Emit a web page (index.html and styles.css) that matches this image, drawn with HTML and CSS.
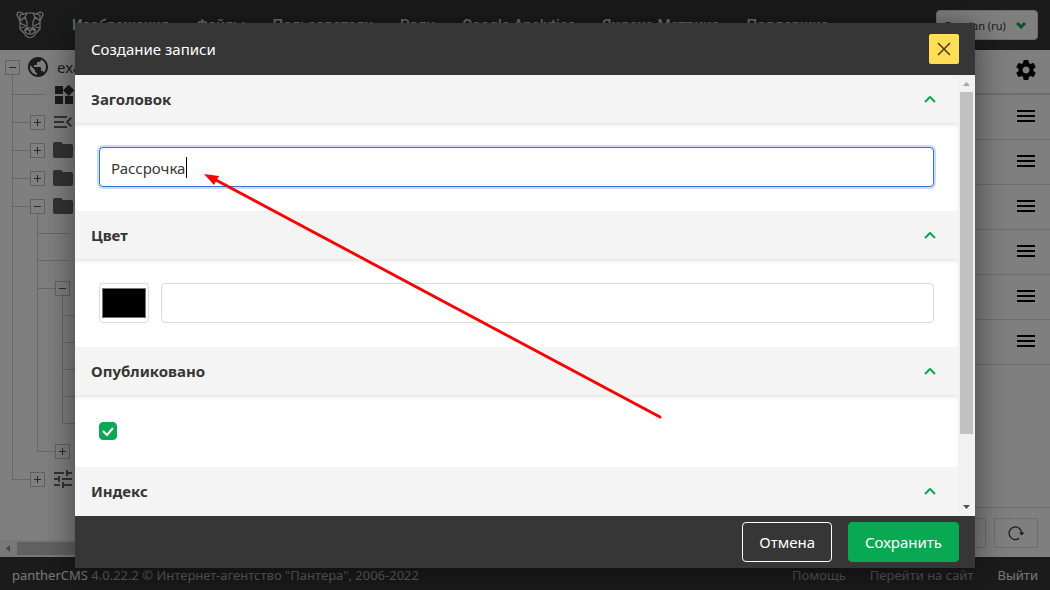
FILE: index.html
```html
<!DOCTYPE html>
<html lang="ru">
<head>
    <meta charset="UTF-8">
    <meta name="viewport" content="width=device-width, initial-scale=1.0">
    <title>pantherCMS</title>
    <link rel="stylesheet" href="styles.css">
</head>
<body>
    <!-- Иконки -->
    <svg class="sprite" aria-hidden="true">
        <symbol id="i-folder" viewBox="0 0 24 24"><path d="M10 4H4c-1.100 0-2 .9-2 2v12c0 1.100.9 2 2 2h16c1.100 0 2-.9 2-2V8c0-1.100-.9-2-2-2h-8z"/></symbol>
        <symbol id="i-menu" viewBox="0 0 24 24"><path d="M3 18h18v-2H3v2zm0-5h18v-2H3v2zm0-7v2h18V6H3z"/></symbol>
        <symbol id="i-up" viewBox="0 0 12 8"><path d="M1 7l5-5 5 5" fill="none" stroke="currentColor" stroke-width="2"/></symbol>
    </svg>

    <header class="topbar">
        <a href="#" class="logo" aria-label="pantherCMS">
            <svg viewBox="0 0 28 28" width="28" height="28" stroke="currentColor" stroke-width="1.200" stroke-linejoin="round">
                <path d="M4 11L1 5q0-3 3-3l4 2 3-1h6l3 1 4-2q3 0 3 3l-3 6v8l-4 4-2 3-4 2-4-2-2-3-4-4z"/>
                <path d="M4 11l0-6 4-1M24 11V5l-4-1M4 11l5-4 2 5v5l-3 4M24 11l-5-4-2 5v5l3 4M9 7l2-4M19 7l-2-4M4 13l6 3M24 13l-6 3M4 18l5-1M24 18l-5-1"/>
                <path d="M11 18h6l-3 3zM14 21v3M11 18l-2 4 3 2h4l3-2-2-4"/>
            </svg>
        </a>
        <nav class="nav">
            <a href="#">Изображения</a>
            <a href="#">Файлы</a>
            <a href="#">Пользователи</a>
            <a href="#">Роли</a>
            <a href="#">Google Analytics</a>
            <a href="#">Яндекс.Метрика</a>
            <a href="#">Поддержка</a>
        </nav>
        <div class="lang">
            <select aria-label="Язык">
                <option>Russian (ru)</option>
            </select>
            <svg viewBox="0 0 12 8" width="12" height="8"><path d="M2 2l4 4 4-4" fill="none" stroke="currentColor" stroke-width="3"/></svg>
        </div>
    </header>

    <main class="workspace">
        <aside class="sidebar">
            <div class="tree">
                <div class="row root">
                    <button class="toggle" aria-label="Свернуть"></button>
                    <svg class="icon" viewBox="0 0 24 24"><path d="M12 2C6.480 2 2 6.480 2 12s4.480 10 10 10 10-4.480 10-10S17.520 2 12 2zm-1 17.930c-3.950-.49-7-3.850-7-7.930 0-.62.08-1.210.21-1.790L9 15v1c0 1.100.9 2 2 2v1.930zm6.900-2.540c-.26-.81-1-1.390-1.900-1.390h-1v-3c0-.55-.45-1-1-1H8v-2h2c.55 0 1-.45 1-1V7h2c1.100 0 2-.9 2-2v-.41c2.930 1.190 5 4.060 5 7.410 0 2.080-.8 3.970-2.100 5.390z"/></svg>
                    <a href="#">example.com</a>
                </div>
                <ul>
                    <li>
                        <div class="row leaf"><svg class="icon" viewBox="0 0 24 24"><path d="M13 13v8h8v-8h-8zM3 21h8v-8H3v8zM3 3v8h8V3H3zm13.660-1.310L11 7.340 16.660 13l5.660-5.660-5.660-5.650z"/></svg></div>
                    </li>
                    <li>
                        <div class="row"><button class="toggle plus" aria-label="Развернуть"></button><svg class="icon soft" viewBox="0 0 24 24"><path d="M3 18h13v-2H3v2zM3 13h10v-2H3v2zm0-7v2h13V6H3zm18 9.590L17.420 12 21 8.410 19.590 7l-5 5 5 5L21 15.590z"/></svg></div>
                    </li>
                    <li>
                        <div class="row"><button class="toggle plus" aria-label="Развернуть"></button><svg class="icon soft"><use href="#i-folder"/></svg></div>
                    </li>
                    <li>
                        <div class="row"><button class="toggle plus" aria-label="Развернуть"></button><svg class="icon soft"><use href="#i-folder"/></svg></div>
                    </li>
                    <li>
                        <div class="row"><button class="toggle" aria-label="Свернуть"></button><svg class="icon soft"><use href="#i-folder"/></svg></div>
                        <ul>
                            <li><div class="row leaf"></div></li>
                            <li><div class="row leaf"></div></li>
                            <li>
                                <div class="row"><button class="toggle" aria-label="Свернуть"></button></div>
                                <ul>
                                    <li><div class="row leaf"></div></li>
                                    <li><div class="row leaf"></div></li>
                                    <li><div class="row leaf"></div></li>
                                    <li><div class="row leaf"></div></li>
                                    <li><div class="row leaf"></div></li>
                                </ul>
                            </li>
                            <li>
                                <div class="row"><button class="toggle plus" aria-label="Развернуть"></button></div>
                            </li>
                        </ul>
                    </li>
                    <li>
                        <div class="row"><button class="toggle plus" aria-label="Развернуть"></button><svg class="icon soft" viewBox="0 0 24 24"><path d="M3 17v2h6v-2H3zM3 5v2h10V5H3zm10 16v-2h8v-2h-8v-2h-2v6h2zM7 9v2H3v2h4v2h2V9H7zm14 4v-2H11v2h10zm-6-4h2V7h4V5h-4V3h-2v6z"/></svg></div>
                    </li>
                </ul>
            </div>
            <div class="hscroll">
                <svg viewBox="0 0 17 17" width="17" height="17"><path d="M10 5v7L6 8.500z"/></svg>
                <span class="hthumb"></span>
            </div>
        </aside>

        <section class="records">
            <div class="record head">
                <button aria-label="Настройки"><svg viewBox="0 0 24 24"><path d="M19.430 12.980c.04-.32.07-.64.07-.98s-.03-.66-.07-.98l2.110-1.650c.19-.15.24-.42.12-.64l-2-3.460c-.12-.22-.39-.3-.61-.22l-2.490 1c-.52-.4-1.080-.73-1.690-.98l-.38-2.650C14.460 2.180 14.250 2 14 2h-4c-.25 0-.46.18-.49.42l-.38 2.650c-.61.25-1.170.59-1.690.98l-2.490-1c-.23-.09-.49 0-.61.22l-2 3.460c-.13.22-.07.49.12.64l2.110 1.650c-.04.32-.07.65-.07.98s.03.66.07.98l-2.110 1.650c-.19.15-.24.42-.12.64l2 3.460c.12.22.39.3.61.22l2.490-1c.52.4 1.080.73 1.690.98l.38 2.650c.03.24.24.42.49.42h4c.25 0 .46-.18.49-.42l.38-2.650c.61-.25 1.170-.59 1.690-.98l2.490 1c.23.09.49 0 .61-.22l2-3.460c.12-.22.07-.49-.12-.64l-2.110-1.650zM12 15.500c-1.930 0-3.500-1.570-3.500-3.500s1.570-3.500 3.500-3.500 3.500 1.570 3.500 3.500-1.570 3.500-3.500 3.500z"/></svg></button>
            </div>
            <div class="record"><button aria-label="Меню записи"><svg><use href="#i-menu"/></svg></button></div>
            <div class="record"><button aria-label="Меню записи"><svg><use href="#i-menu"/></svg></button></div>
            <div class="record"><button aria-label="Меню записи"><svg><use href="#i-menu"/></svg></button></div>
            <div class="record"><button aria-label="Меню записи"><svg><use href="#i-menu"/></svg></button></div>
            <div class="record"><button aria-label="Меню записи"><svg><use href="#i-menu"/></svg></button></div>
            <div class="record"><button aria-label="Меню записи"><svg><use href="#i-menu"/></svg></button></div>
            <div class="pager">
                <button aria-label="Страница"></button>
                <button aria-label="Обновить">
                    <svg viewBox="0 0 16 16" width="16" height="16"><path d="M11 13.400A6.300 6.300 0 1 1 13.700 8" fill="none" stroke="currentColor" stroke-width="1.300"/><path d="M11 7.500h5.500L13.700 10.500z"/></svg>
                </button>
            </div>
        </section>
    </main>

    <footer class="bottombar">
        <p><a href="#">pantherCMS</a> 4.0.22.2 © Интернет-агентство "Пантера", 2006-2022</p>
        <nav>
            <a href="#" class="dim">Помощь</a>
            <a href="#" class="dim">Перейти на сайт</a>
            <a href="#">Выйти</a>
        </nav>
    </footer>

    <!-- Модальное окно -->
    <div class="overlay">
        <form class="modal" role="dialog" aria-labelledby="modal-title">
            <div class="modal-head">
                <h1 id="modal-title">Создание записи</h1>
                <button type="button" class="close" aria-label="Закрыть">
                    <svg viewBox="0 0 14 14" width="14" height="14"><path d="M1 1l12 12M13 1L1 13" fill="none" stroke="currentColor" stroke-width="1.500"/></svg>
                </button>
            </div>
            <div class="modal-body">
                <div class="fields">
                    <section class="field">
                        <h2><label for="title">Заголовок</label><svg><use href="#i-up"/></svg></h2>
                        <div class="field-body">
                            <div class="text-wrap">
                                <input type="text" id="title" class="text active" value="Рассрочка">
                                <span class="caret"></span>
                            </div>
                        </div>
                    </section>
                    <section class="field">
                        <h2><label for="color">Цвет</label><svg><use href="#i-up"/></svg></h2>
                        <div class="field-body">
                            <input type="color" class="swatch" value="#000000" aria-label="Выбор цвета">
                            <input type="text" id="color" class="text">
                        </div>
                    </section>
                    <section class="field">
                        <h2><label for="published">Опубликовано</label><svg><use href="#i-up"/></svg></h2>
                        <div class="field-body check-body">
                            <input type="checkbox" id="published" checked>
                            <svg class="tick" viewBox="0 0 18 18"><path d="M4 9l4 4 6-7" fill="none" stroke="currentColor" stroke-width="2"/></svg>
                        </div>
                    </section>
                    <section class="field">
                        <h2>Индекс<svg><use href="#i-up"/></svg></h2>
                    </section>
                </div>
                <div class="vscroll">
                    <svg class="arrow-up" viewBox="0 0 17 17" width="17" height="17"><path d="M5 11h7L8.500 7z"/></svg>
                    <span class="vtrack"><span class="vthumb"></span></span>
                    <svg viewBox="0 0 17 17" width="17" height="17"><path d="M5 6h7L8.500 10z"/></svg>
                </div>
            </div>
            <div class="modal-foot">
                <button type="button" class="btn">Отмена</button>
                <button type="submit" class="btn save">Сохранить</button>
            </div>
        </form>
    </div>

    <!-- Стрелка-подсказка -->
    <svg class="arrow" width="470" height="260" viewBox="0 0 470 260">
        <path d="M14 7L460 245" stroke="#f00" stroke-width="3" stroke-linecap="round"/>
        <path d="M4 2l15 2-5 9z" fill="#f00"/>
    </svg>
</body>
</html>
```

FILE: styles.css
```css
:root {
    --dark: #363636;
    --green: #09a953;
    --line: #dbdbdb;
    --tree-line: #cfcfcf;
}

* {
    box-sizing: border-box;
}

body {
    margin: 0;
    height: 100vh;
    display: flex;
    flex-direction: column;
    overflow: hidden;
    font-family: 'Noto Sans', 'Open Sans', sans-serif;
    font-size: 15px;
    color: var(--dark);
    background: white;
}

a {
    color: inherit;
    text-decoration: none;
}

button, input, select {
    font: inherit;
    color: inherit;
}

button {
    padding: 0;
    border: none;
    background: none;
    cursor: pointer;
}

svg {
    display: block;
    fill: currentColor;
}

.sprite {
    display: none;
}

/* Верхняя панель */
.topbar {
    display: flex;
    align-items: center;
    height: 50px;
    padding: 0 12px 0 16px;
    background: var(--dark);
    flex: none;
}

.logo {
    color: #ddd;
    margin-right: 28px;
    padding-bottom: 2px;
}

.logo svg {
    fill: none;
}

.nav {
    display: flex;
    gap: 27px;
    flex: 1;
    font-family: Roboto, sans-serif;
    font-weight: 500;
    color: #ddd;
}

.lang {
    display: grid;
    align-items: center;
    width: 102px;
    font-size: 11px;
}

.lang > * {
    grid-area: 1 / 1;
}

.lang select {
    appearance: none;
    width: 100%;
    height: 30px;
    padding: 0 8px;
    border: 1px solid var(--line);
    border-radius: 4px;
    background: white;
}

.lang svg {
    justify-self: end;
    margin-right: 11px;
    color: var(--green);
    pointer-events: none;
}

/* Рабочая область */
.workspace {
    display: flex;
    flex: 1;
    min-height: 0;
}

.sidebar {
    display: flex;
    flex-direction: column;
    width: 30%;
}

/* Дерево страниц */
.tree {
    flex: 1;
    padding: 3px 0 0 5px;
    overflow: hidden;
}

.tree ul {
    list-style: none;
    margin: -6px 0 0 25px;
    padding: 6px 0 0;
    background: linear-gradient(var(--tree-line), var(--tree-line)) 0 0 / 1px 6px no-repeat;
}

.tree .root + ul {
    margin-left: 7px;
}

.tree li {
    background: linear-gradient(var(--tree-line), var(--tree-line)) 0 0 / 1px 100% no-repeat;
}

.tree li:last-child {
    background-size: 1px 14px;
}

.row {
    display: flex;
    align-items: center;
    height: 28px;
}

.row::before {
    content: '';
    width: 18px;
    height: 1px;
    background: var(--tree-line);
}

.row.leaf {
    height: 27px;
}

.row.leaf::before {
    width: 32px;
}

.row.root::before {
    display: none;
}

.toggle {
    width: 15px;
    height: 15px;
    border: 1px solid #c4c4c4;
    background: linear-gradient(#555, #555) center / 7px 1px no-repeat;
}

.toggle.plus {
    background: linear-gradient(#555, #555) center / 7px 1px no-repeat, linear-gradient(#555, #555) center / 1px 7px no-repeat;
}

.icon {
    width: 24px;
    height: 24px;
    margin: 0 7px 0 6px;
}

.leaf .icon {
    margin-left: 8px;
}

.icon.soft {
    color: #666;
}

.hscroll {
    display: flex;
    align-items: center;
    height: 17px;
    background: #f1f1f1;
    color: #888;
}

.hthumb {
    width: 80%;
    height: 13px;
    background: #c1c1c1;
}

/* Список записей */
.records {
    display: flex;
    flex-direction: column;
    flex: 1;
    color: black;
}

.record {
    display: flex;
    align-items: center;
    justify-content: flex-end;
    height: 45px;
    padding: 0 12px 2px 0;
    border-bottom: 1px solid var(--line);
}

.record.head {
    padding-bottom: 4px;
    border-bottom-width: 2px;
}

.record svg {
    width: 24px;
    height: 24px;
}

.pager {
    display: flex;
    justify-content: flex-end;
    gap: 8px;
    margin-top: auto;
    padding: 10px 12px 9px;
    border-top: 1px solid var(--line);
    color: var(--dark);
}

.pager button {
    display: grid;
    place-items: center;
    width: 44px;
    height: 30px;
    border: 1px solid var(--line);
    border-radius: 2px;
}

/* Нижняя панель */
.bottombar {
    display: flex;
    align-items: center;
    justify-content: space-between;
    height: 33px;
    padding: 2px 12px 0;
    background: var(--dark);
    color: #bbb;
    font-size: 13px;
    flex: none;
}

.bottombar p {
    margin: 0;
}

.bottombar a {
    color: #eee;
}

.bottombar .dim {
    color: #aaa;
}

.bottombar nav {
    display: flex;
    gap: 24px;
}

/* Модальное окно */
.overlay {
    position: fixed;
    inset: 0;
    display: flex;
    justify-content: center;
    padding: 23px 24px 22px;
    background: rgba(0,0,0,0.5);
}

.modal {
    display: flex;
    flex-direction: column;
    width: 100%;
    max-width: 900px;
    box-shadow: 0 4px 32px rgba(0,0,0,0.5);
}

.modal-head, .modal-foot {
    display: flex;
    align-items: center;
    height: 52px;
    padding: 0 16px;
    background: var(--dark);
    color: white;
    flex: none;
}

.modal-head {
    justify-content: space-between;
}

.modal-head h1 {
    margin: 0;
    font-size: 15px;
    font-weight: normal;
}

.close {
    display: grid;
    place-items: center;
    width: 30px;
    height: 30px;
    border-radius: 2px;
    background: #ffdd57;
    color: #453b10;
}

.modal-body {
    display: flex;
    flex: 1;
    min-height: 0;
    background: #f4f4f4;
}

.fields {
    flex: 1;
    overflow: hidden;
}

.field h2 {
    display: flex;
    align-items: center;
    justify-content: space-between;
    height: 48px;
    margin: 0;
    padding: 0 22px 0 16px;
    font-size: 15px;
}

.field h2 svg {
    width: 12px;
    height: 8px;
    color: var(--green);
}

.field-body {
    display: flex;
    gap: 12px;
    padding: 24px;
    background: white;
    border-radius: 0 0 4px 4px;
    box-shadow: inset 0 5px 4px -3px rgba(0,0,0,0.1);
}

.text-wrap {
    position: relative;
    flex: 1;
}

.text {
    width: 100%;
    height: 40px;
    padding: 2px 11px 0;
    border: 1px solid var(--line);
    border-radius: 4px;
    outline: none;
    background: white;
}

.text.active {
    border-color: #3273dc;
    box-shadow: 0 0 0 2px rgba(50,115,220,0.25);
}

.caret {
    position: absolute;
    top: 10px;
    left: 87px;
    width: 1px;
    height: 21px;
    background: black;
}

.swatch {
    width: 50px;
    height: 40px;
    padding: 0;
    border: 1px solid var(--line);
    border-radius: 4px;
    background: white;
    flex: none;
}

/* Флажок */
.check-body {
    display: grid;
    grid-template-columns: 18px;
    padding: 27px 24px;
}

.check-body > * {
    grid-area: 1 / 1;
    width: 18px;
    height: 18px;
    margin: 0;
}

.check-body input {
    appearance: none;
    border: 1px solid var(--line);
    border-radius: 4px;
}

.check-body input:checked {
    border-color: var(--green);
    background: var(--green);
}

.tick {
    color: white;
    pointer-events: none;
}

/* Полоса прокрутки */
.vscroll {
    display: flex;
    flex-direction: column;
    width: 17px;
    background: #f1f1f1;
    color: #505050;
}

.arrow-up {
    color: #a3a3a3;
}

.vtrack {
    flex: 1;
    padding: 0 2px;
}

.vthumb {
    display: block;
    height: 84%;
    background: #c1c1c1;
}

.modal-foot {
    justify-content: flex-end;
    gap: 16px;
}

.btn {
    height: 40px;
    padding: 0 16px;
    border: 1px solid white;
    border-radius: 4px;
}

.btn.save {
    border-color: var(--green);
    background: var(--green);
}

/* Стрелка поверх окна */
.arrow {
    position: absolute;
    top: 172px;
    left: 200px;
    pointer-events: none;
}
```
